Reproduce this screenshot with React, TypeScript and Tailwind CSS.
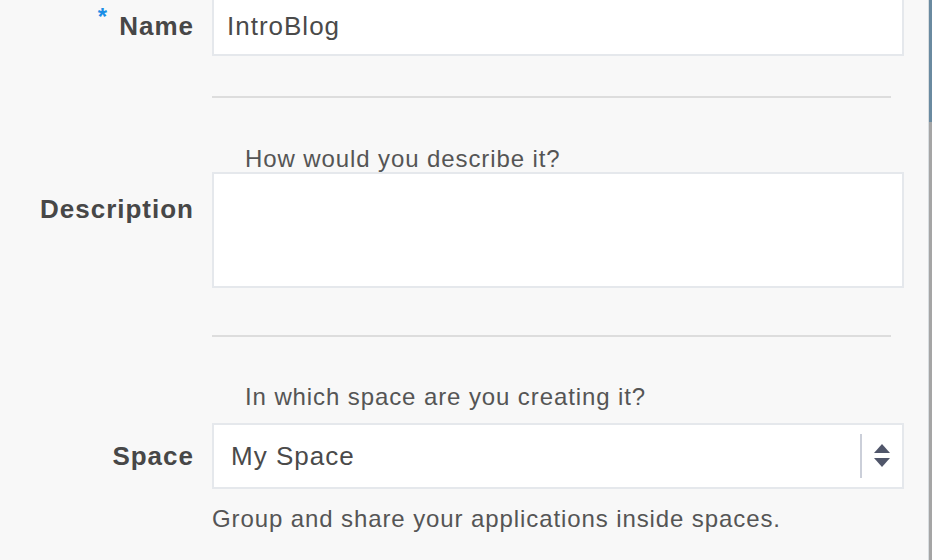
import React from "react";

const FONT = { fontFamily: '"Liberation Sans", Arial, sans-serif' };

const SelectArrows = () => (
  <svg width="18" height="26" viewBox="0 0 18 26" className="text-[#50566a]">
    <path d="M9 1 L17 10 L1 10 Z" fill="currentColor" />
    <path d="M1 15 L17 15 L9 24 Z" fill="currentColor" />
  </svg>
);

const Label = ({ children, className = "" }: { children: React.ReactNode; className?: string }) => (
  <div
    className={`w-[194px] shrink-0 text-right text-[26px] leading-[30px] font-bold tracking-[1px] text-[#474747] ${className}`}
  >
    {children}
  </div>
);

const Hint = ({ children, className = "" }: { children: React.ReactNode; className?: string }) => (
  <div className={`text-[24px] leading-[27px] tracking-[0.9px] text-[#555] ${className}`}>{children}</div>
);

export default function App() {
  return (
    <div style={FONT} className="flex h-[560px] w-[932px] overflow-hidden bg-[#f8f8f8]">
      <div className="flex-1">
        {/* name */}
        <div className="-mt-[4px] flex items-center gap-[18px]">
          <Label>
            <span className="mr-[11px] inline-block align-top text-[24px] leading-[12px] font-bold text-[#1a8ee6]">*</span>
            Name
          </Label>
          <div className="flex h-[60px] w-[692px] items-center border-2 border-[#e5e8ec] bg-white px-[13px] text-[26px] tracking-[1px] text-[#4a4a4a]">
            IntroBlog
          </div>
        </div>

        <div className="ml-[212px] mt-[40px] h-[2px] w-[679px] bg-[#dddddd]" />

        {/* description */}
        <Hint className="ml-[245px] mt-[47px]">How would you describe it?</Hint>
        <div className="flex items-start gap-[18px]">
          <Label className="pt-[22px]">Description</Label>
          <div className="h-[116px] w-[692px] border-2 border-[#e5e8ec] bg-white" />
        </div>

        <div className="ml-[212px] mt-[47px] h-[2px] w-[679px] bg-[#dddddd]" />

        {/* space */}
        <Hint className="ml-[245px] mt-[46px]">In which space are you creating it?</Hint>
        <div className="mt-[13px] flex items-center gap-[18px]">
          <Label>Space</Label>
          <div className="flex h-[66px] w-[692px] items-center border-2 border-[#e5e8ec] bg-white pl-[17px] pr-[11px]">
            <span className="flex-1 text-[26px] tracking-[1px] text-[#4a4a4a]">My Space</span>
            <div className="h-[44px] w-[2px] bg-[#cbcfd9]" />
            <div className="ml-[11px] flex items-center">
              <SelectArrows />
            </div>
          </div>
        </div>
        <Hint className="ml-[212px] mt-[16px]">Group and share your applications inside spaces.</Hint>
      </div>

      {/* window edge / scrollbar */}
      <div className="flex w-[4px] shrink-0 flex-col border-l border-[#d8dde0]">
        <div className="h-[122px] bg-[#6a8aa0]" />
        <div className="flex-1 bg-[#a5a5a5]" />
      </div>
    </div>
  );
}
